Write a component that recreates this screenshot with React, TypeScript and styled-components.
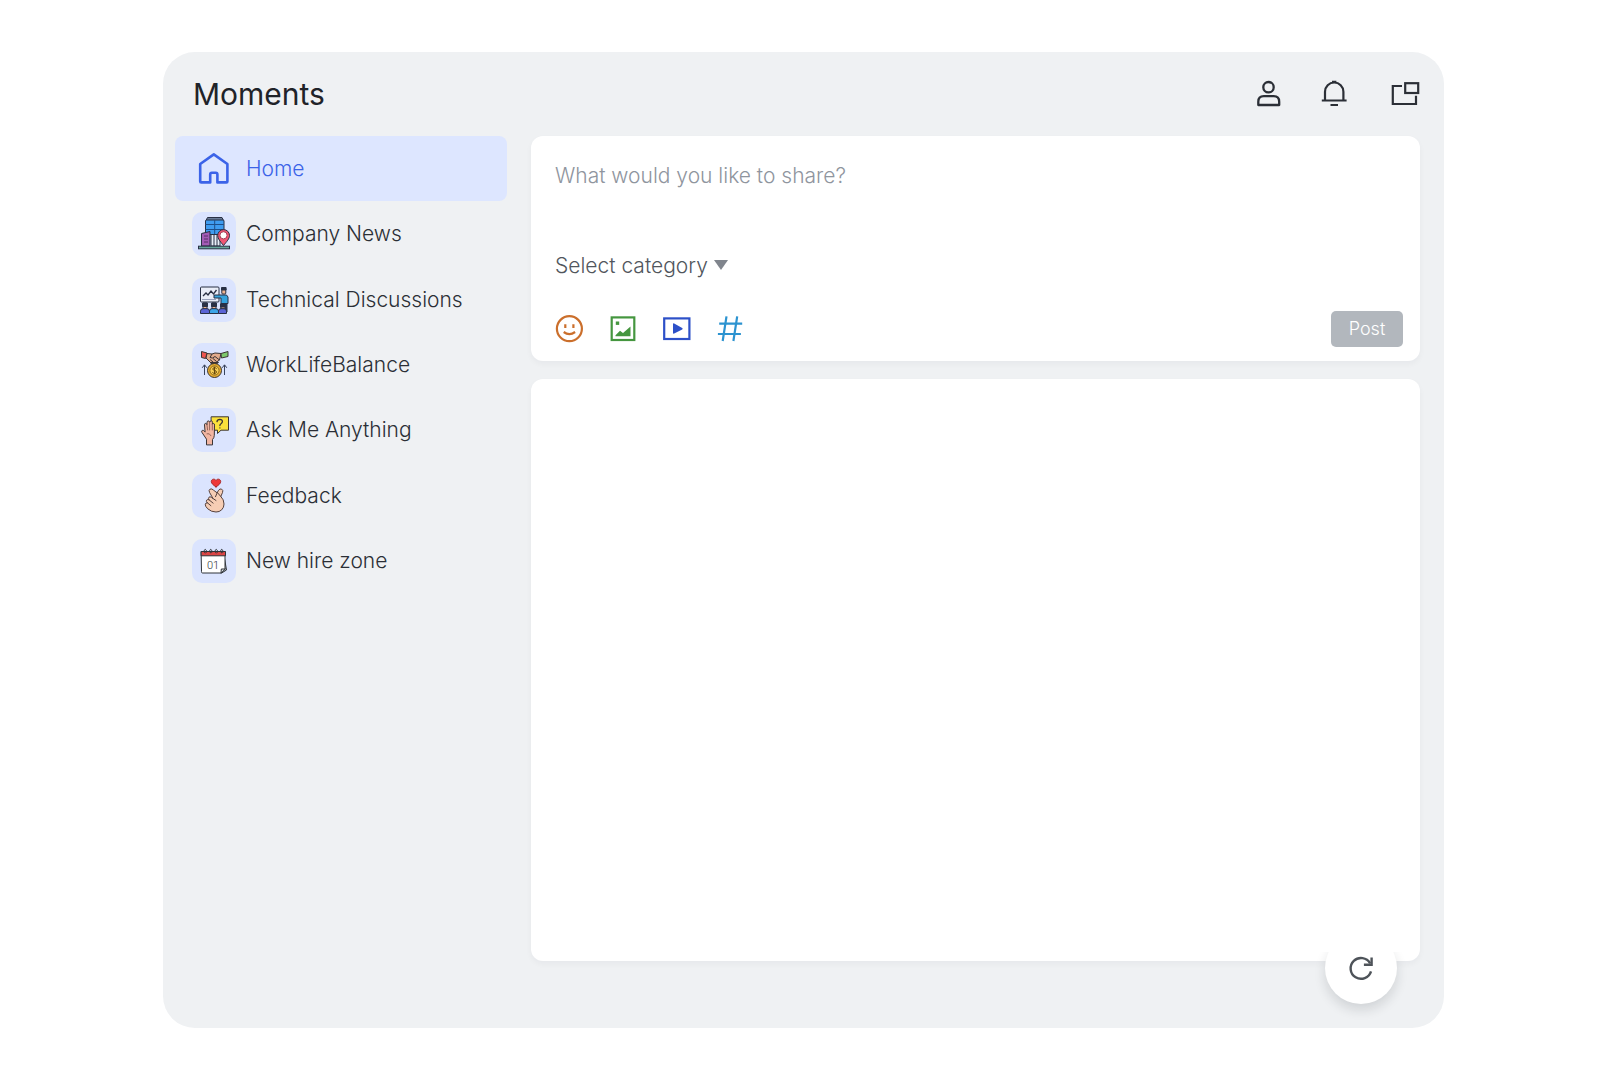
import React from "react";
import styled, { createGlobalStyle, css } from "styled-components";

const GlobalStyle = createGlobalStyle`
  *, *::before, *::after { box-sizing: border-box; }
  body {
    margin: 0;
    background: #ffffff;
    color: #2b2f36;
    font-family: Inter, "Liberation Sans", sans-serif;
    font-size: 21px;
    font-weight: 300;
    line-height: 28px;
  }
  button, select, textarea { font: inherit; color: inherit; }
`;

const Page = styled.div`
  display: flex;
  min-height: 100vh;
  padding: 52px 156px 52px 163px;
`;

const Window = styled.div`
  position: relative;
  flex: 1;
  display: flex;
  flex-direction: column;
  padding: 0 24px 67px 12px;
  border-radius: 32px;
  background: #eff1f3;
`;

const Header = styled.header`
  display: flex;
  align-items: center;
  justify-content: space-between;
  height: 84px;
  padding-left: 18px;
`;

const Title = styled.h1`
  margin: 0;
  color: #1f2329;
  font-size: 30px;
  font-weight: 400;
  line-height: 36px;
`;

const HeaderActions = styled.div`
  display: flex;
  gap: 30px;
`;

const iconButton = css`
  display: block;
  padding: 0;
  border: 0;
  background: none;
  cursor: pointer;
  svg { display: block; }
`;

const HeaderButton = styled.button`
  ${iconButton}
  width: 36px;
  height: 28px;
  color: #2b2f36;
`;

const Body = styled.div`
  flex: 1;
  display: grid;
  grid-template-columns: 332px minmax(0, 1fr);
  gap: 24px;
`;

const NavList = styled.ul`
  display: grid;
  grid-template-rows: repeat(7, 1fr);
  height: 458px;
  margin: 0;
  padding: 0;
  list-style: none;
`;

const NavLink = styled.a<{ $active?: boolean }>`
  display: flex;
  align-items: center;
  gap: 10px;
  height: 100%;
  padding: 0 17px;
  border-radius: 8px;
  color: ${(p) => (p.$active ? "#3b63e8" : "#2b2f36")};
  background: ${(p) => (p.$active ? "#dde6ff" : "transparent")};
  text-decoration: none;
`;

const Tile = styled.span<{ $plain?: boolean }>`
  display: block;
  width: 44px;
  height: 44px;
  border-radius: 10px;
  background: ${(p) => (p.$plain ? "transparent" : "#dbe4fe")};
  svg { display: block; }
`;

const Main = styled.main`
  display: flex;
  flex-direction: column;
  gap: 18px;
`;

const Card = styled.section`
  border-radius: 12px;
  background: #ffffff;
  box-shadow: 0 3px 6px rgba(31, 35, 41, 0.04);
`;

const Composer = styled(Card).attrs({ as: "form" })`
  padding: 26px 17px 14px 24px;
`;

const ShareBox = styled.textarea`
  display: block;
  width: 100%;
  height: 90px;
  padding: 0;
  border: 0;
  outline: 0;
  resize: none;
  background: none;
  &::placeholder { color: #8f959e; opacity: 1; }
`;

const CategoryField = styled.div`
  position: relative;
  width: fit-content;
  height: 28px;
  margin-bottom: 31px;
  svg {
    position: absolute;
    right: 0;
    top: 8px;
    pointer-events: none;
  }
`;

const CategorySelect = styled.select`
  display: block;
  appearance: none;
  height: 28px;
  padding: 0 20px 0 0;
  border: 0;
  outline: 0;
  background: none;
  color: #51565d;
`;

const ComposerFooter = styled.div`
  display: flex;
  align-items: center;
  justify-content: space-between;
`;

const Tools = styled.div`
  display: flex;
  gap: 26px;
`;

const ToolButton = styled.button<{ $color: string }>`
  ${iconButton}
  width: 28px;
  height: 28px;
  color: ${(p) => p.$color};
`;

const PostButton = styled.button`
  width: 72px;
  height: 36px;
  padding: 0;
  border: 0;
  border-radius: 5px;
  background: #b2b7bd;
  color: #ffffff;
  font-size: 18px;
`;

const Feed = styled(Card)`
  flex: 1;
`;

const RefreshButton = styled.button`
  ${iconButton}
  position: absolute;
  right: 47px;
  bottom: 24px;
  display: grid;
  place-items: center;
  width: 72px;
  height: 72px;
  border-radius: 50%;
  background: #ffffff;
  color: #4e5359;
  box-shadow: 0 6px 12px rgba(31, 35, 41, 0.14);
  clip-path: inset(20px -30px -30px -30px);
`;

const HomeIcon = () => (
  <svg width="44" height="44" fill="none" stroke="currentColor" strokeWidth="2.6" strokeLinejoin="round">
    <path d="M21.800 7.400 35.400 17V34.400a1 1 0 0 1-1 1H25.400V27.400a1.600 1.600 0 0 0-1.600-1.600h-4a1.600 1.600 0 0 0-1.600 1.600V35.400H9.200a1 1 0 0 1-1-1V17Z" />
  </svg>
);

const CompanyIcon = () => (
  <svg width="44" height="44" stroke="#293044" strokeWidth="1">
    <rect x="19" y="22" width="9" height="12" fill="#e8eef8" />
    <path d="M22 22v12M25 22v12" />
    <path d="M15.5 5.5h14.5l1.5 3H14Z" fill="#6a7c98" />
    <rect x="13.5" y="8" width="18.5" height="14.5" rx="1" fill="#3f9cf0" />
    <path d="M13.5 12.5H32M13.5 17.5H32M22.7 8v14" stroke="#1e4f8a" />
    <path d="M9.5 34V21.5l8.5-2V34Z" fill="#a35bb5" />
    <path d="M12 24h4M12 27h4M12 30h4" stroke="#573068" />
    <path d="M31.5 33.5c-3.4-4.2-5.8-6.800-5.800-10a5.900 5.900 0 0 1 11.800 0c0 3.200-2.600 5.800-6 10Z" fill="#ef5674" />
    <circle cx="31.500" cy="23.300" r="3.600" fill="#fff" stroke="#a83d55" />
    <rect x="6.500" y="34.200" width="31" height="2.600" fill="#66a79b" />
  </svg>
);

const TechnicalIcon = () => (
  <svg width="44" height="44" stroke="#293044" strokeWidth="1">
    <rect x="8.500" y="9" width="18.500" height="15" rx="1" fill="#e9edf8" />
    <path d="m11 18 3-3 2 2 3-4 2.500 3 3-4" fill="none" strokeWidth="1.300" />
    <path d="M10 21.500h14" stroke="#9aa2bd" />
    <path d="M29 25h6v9h-6Z" fill="#303a55" />
    <path d="M22 17h12.500l1.500 2v6.500h-7V20H22Z" fill="#36a3dd" />
    <rect x="29.800" y="10.500" width="4" height="5.500" rx="1" fill="#efb48f" />
    <path d="M29.500 12V9.500h4.600V12Z" fill="#293044" />
    <g fill="#efb48f">
      <path d="M11 25h4v6h-4Z" />
      <path d="M20 25h4v6h-4Z" />
      <path d="M29 26h4v5h-4Z" />
    </g>
    <path d="M10.500 25h5v3.500h-5ZM19.500 25h5v3.500h-5ZM28.500 26h5v3h-5Z" fill="#293044" />
    <path d="M8.500 35.500v-2.300q0-2.500 2.500-2.500h4q2.500 0 2.500 2.500v2.300Z" fill="#5b64d6" />
    <path d="M17.500 35.500v-2.300q0-2.500 2.500-2.500h4q2.500 0 2.500 2.500v2.300Z" fill="#3ca4e8" />
    <path d="M26.500 35.500v-2.300q0-2.500 2.500-2.500h3q2.500 0 2.500 2.500v2.300Z" fill="#5b64d6" />
  </svg>
);

const BalanceIcon = () => (
  <svg width="44" height="44" stroke="#3b3434" strokeWidth="1" strokeLinejoin="round">
    <path d="m15 10.500 5 .5 3-1 6 .5-1.500 6.500-5 3.500-4-1L14 15Z" fill="#e2ab8c" />
    <path d="m20 11-2 3.500 2.500.500 2.500-1.500 4.500 3.500M18 16.500l3 2.500M21 15.500l3.500 3" fill="none" />
    <path d="m9.500 8.500 5.500 1.500-1.500 5.500-4-1Z" fill="#ee5450" />
    <path d="m36 8.500-7 2 .500 4.500 6.500-1.500Z" fill="#7cc96c" />
    <path d="m18 19.500 4 3 4.500-3Z" fill="#553e35" />
    <circle cx="22.500" cy="27.500" r="7" fill="#e9ae2e" />
    <circle cx="22.500" cy="27.500" r="4.600" fill="#f7cd54" stroke="#8d691f" />
    <path d="M24.600 25.600q-1-1-2.300-.900-1.600.200-1.500 1.400.1 1 1.700 1.300 2 .400 2 1.700-.1 1.300-1.900 1.300-1.300 0-2.200-1M22.500 23.700v7.600" fill="none" stroke="#65470c" />
    <path d="M12.500 32V22m-2.300 2.800 2.300-3 2.300 3M32.500 32V22m-2.300 2.800 2.300-3 2.300 3" fill="none" stroke="#39435c" />
  </svg>
);

const AskIcon = () => (
  <svg width="44" height="44" stroke="#3b3434" strokeWidth="1" strokeLinejoin="round" strokeLinecap="round">
    <path d="M19.500 8.800h17v13.400H29l-3.500 3.300v-3.300h-6Z" fill="#fbe13b" />
    <path d="M25 13.600q.300-2.300 2.800-2.300 2.700.100 2.600 2.300 0 1.300-1.400 2.100-1.100.600-1.100 1.800M27.900 19.800v.100" fill="none" strokeWidth="1.300" />
    <path d="M14.500 36.500v-5.300L10 24.500q-.900-1.700.400-2.200 1-.300 2 1l.700.800-.6-7.200q0-1.500 1.100-1.500 1 0 1.300 1.500l.2-2.600q.1-1.400 1.200-1.400t1.300 1.400l.4-.5q.3-1.100 1.300-1 1.100.1 1.100 1.500v2q.300-1 1.200-.8 1 .100.900 1.600l-.2 10.300q-.1 2.500-1.800 4.100v5Z" fill="#f2b6a2" />
    <path d="m14.900 16.400.7 5.600M17.600 14.300v7.700M20.300 16.300v5.700M15 25.700q2.500-1 4 2" fill="none" stroke="#96665a" />
  </svg>
);

const FeedbackIcon = () => (
  <svg width="44" height="44" stroke="#56413c" strokeWidth="1" strokeLinejoin="round" strokeLinecap="round">
    <path d="M24 12.900c-3-2-4.700-3.500-4.700-5.400 0-2.500 3.300-3.200 4.700-1.100 1.400-2.100 4.700-1.400 4.700 1.100 0 1.900-1.700 3.400-4.700 5.400Z" fill="#ee3838" stroke="#a92a2a" />
    <path d="m25.300 18.500 1.300-2.300q1.300-1.900 3.100-1 1.700 1 .9 3.100l-1.800 4.200q3.200 3 3.200 7.500 0 3.500-2.300 5.800t-5.700 2.200q-4.700 0-8.300-3.200-2.800-2.800-2.400-4.600.4-1.700 2.100-1.200-1.700-1.600-.7-2.900.9-1.200 2.400-.2-1.200-1.600-.1-2.700 1-.9 2.300.1l1.700 1.200-3.500-6.200q-1.100-2.200.6-3.200 1.800-.8 3.200.8Z" fill="#f6cdb4" />
    <path d="m25.300 18.500 3.500 4M25.300 18.500l-1.800 4.200M21 24.500l3 2M17.100 25.900l4 3.200M15.400 28.800l3.500 2.900" fill="none" />
  </svg>
);

const CalendarIcon = () => (
  <svg width="44" height="44" stroke="#2f3338" strokeWidth="1" strokeLinejoin="round" strokeLinecap="round">
    <path d="M32 16.500 34.500 31 30 33.800Z" fill="#cfd4da" />
    <path d="M9.500 12.500h23.500V30l-4 4H10.500a1 1 0 0 1-1-1Z" fill="#fff" />
    <path d="M29 34l.3-4H33Z" fill="#d9dde2" />
    <rect x="9.500" y="12.500" width="24" height="4.300" fill="#dc4545" />
    <path d="M13 14q-1.800-3 .3-3.600 1.600.200 1 3M18.500 14q-1.800-3 .3-3.600 1.600.200 1 3M24 14q-1.800-3 .3-3.600 1.600.200 1 3M29.500 14q-1.800-3 .3-3.600 1.600.200 1 3" fill="none" />
    <text x="21" y="29.500" textAnchor="middle" fontFamily="Roboto, sans-serif" fontSize="11" fontWeight="300" fill="#2f3338" stroke="none">01</text>
  </svg>
);

const UserIcon = () => (
  <svg width="36" height="28" fill="none" stroke="currentColor" strokeWidth="2.3">
    <circle cx="16.500" cy="7.200" r="5.200" />
    <path d="M6.300 25v-3.300q0-5.500 5.500-5.500h9.900q5.500 0 5.500 5.500v3.300Z" strokeLinejoin="round" />
  </svg>
);

const BellIcon = () => (
  <svg width="36" height="28" fill="none" stroke="currentColor" strokeWidth="2.2">
    <path d="M7 20.500v-8.800a9.200 9.200 0 0 1 18.400 0v8.800M3.800 20.500h24.800M12.500 25h7.500M14 1.900h4.400" />
  </svg>
);

const PopOutIcon = () => (
  <svg width="36" height="28" fill="none" stroke="currentColor" strokeWidth="2.2">
    <path d="M18 6H8.800V24h23.200v-8.200" />
    <rect x="21.200" y="3.200" width="13" height="9.800" />
  </svg>
);

const SmileIcon = () => (
  <svg width="28" height="28" fill="none" stroke="currentColor" strokeWidth="2.2">
    <circle cx="14.400" cy="13.700" r="12.500" />
    <path d="M10.300 9.300v3.700M18.400 9.300v3.700" />
    <path d="M8.700 17q5.700 4.200 11.400 0" />
  </svg>
);

const ImageIcon = () => (
  <svg width="28" height="28" fill="currentColor">
    <rect x="2.700" y="2.400" width="22.600" height="22.600" fill="none" stroke="currentColor" strokeWidth="2.200" />
    <rect x="6.800" y="6.500" width="3.400" height="3.400" />
    <path d="M6.500 21.200v-1l4.500-4.400 3 2.300 7.500-6.700v9.800Z" />
  </svg>
);

const VideoIcon = () => (
  <svg width="28" height="28" fill="currentColor">
    <rect x="1.200" y="3.400" width="25.200" height="20.600" fill="none" stroke="currentColor" strokeWidth="2.200" />
    <path d="M10 9.200q0-1.200 1.200-.700l8 4.400q1 .8 0 1.500l-8 4.200q-1.200.500-1.200-.6Z" />
  </svg>
);

const HashIcon = () => (
  <svg width="28" height="28" fill="none" stroke="currentColor" strokeWidth="2.2">
    <path d="M9.500 1.400 5.700 26M20.200 1.400l-3.800 24.600M2.200 8.700h23M.900 19h23" />
  </svg>
);

const RefreshIcon = () => (
  <svg width="28" height="28" fill="none" stroke="currentColor" strokeWidth="2.4">
    <path d="M24 17.300a10.400 10.400 0 1 1-.9-8" />
    <path d="M24.600 3.400v7.400h-7.700" />
  </svg>
);

const sections = [
  { label: "Home", Icon: HomeIcon, active: true },
  { label: "Company News", Icon: CompanyIcon },
  { label: "Technical Discussions", Icon: TechnicalIcon },
  { label: "WorkLifeBalance", Icon: BalanceIcon },
  { label: "Ask Me Anything", Icon: AskIcon },
  { label: "Feedback", Icon: FeedbackIcon },
  { label: "New hire zone", Icon: CalendarIcon },
];

const tools = [
  { label: "Emoji", color: "#cb6f2c", Icon: SmileIcon },
  { label: "Image", color: "#45963f", Icon: ImageIcon },
  { label: "Video", color: "#2d50c8", Icon: VideoIcon },
  { label: "Topic", color: "#2c93d0", Icon: HashIcon },
];

export default function App() {
  return (
    <Page>
      <GlobalStyle />
      <Window>
        <Header>
          <Title>Moments</Title>
          <HeaderActions>
            <HeaderButton type="button" aria-label="Profile"><UserIcon /></HeaderButton>
            <HeaderButton type="button" aria-label="Notifications"><BellIcon /></HeaderButton>
            <HeaderButton type="button" aria-label="Open in window"><PopOutIcon /></HeaderButton>
          </HeaderActions>
        </Header>
        <Body>
          <nav aria-label="Sections">
            <NavList>
              {sections.map(({ label, Icon, active }) => (
                <li key={label}>
                  <NavLink href="#" $active={active} aria-current={active ? "page" : undefined}>
                    <Tile $plain={active} aria-hidden="true"><Icon /></Tile>
                    {label}
                  </NavLink>
                </li>
              ))}
            </NavList>
          </nav>
          <Main>
            <Composer>
              <ShareBox aria-label="Post text" placeholder="What would you like to share?" />
              <CategoryField>
                <CategorySelect aria-label="Category">
                  <option>Select category</option>
                </CategorySelect>
                <svg width="14" height="10" aria-hidden="true">
                  <path d="M0 0h14L7 10Z" fill="#80858d" />
                </svg>
              </CategoryField>
              <ComposerFooter>
                <Tools>
                  {tools.map(({ label, color, Icon }) => (
                    <ToolButton key={label} type="button" aria-label={label} $color={color}>
                      <Icon />
                    </ToolButton>
                  ))}
                </Tools>
                <PostButton type="button">Post</PostButton>
              </ComposerFooter>
            </Composer>
            <Feed aria-label="Posts" />
          </Main>
        </Body>
        <RefreshButton type="button" aria-label="Refresh"><RefreshIcon /></RefreshButton>
      </Window>
    </Page>
  );
}
